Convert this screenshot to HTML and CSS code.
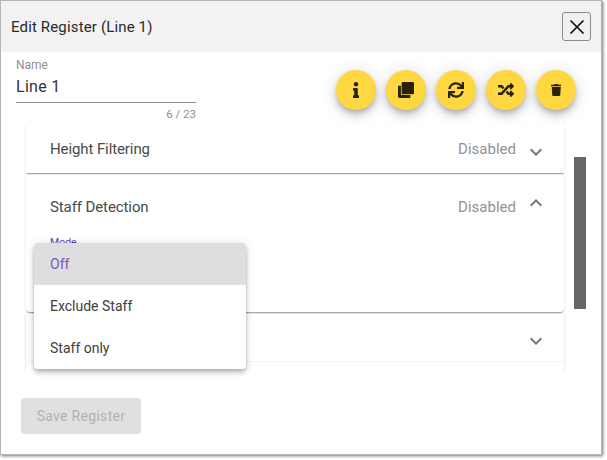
FILE: index.html
```html
<!DOCTYPE html>
<html lang="en">
<head>
<meta charset="utf-8">
<title>Edit Register</title>
<link rel="stylesheet" href="styles.css">
</head>
<body>
<div class="window">
  <header class="head">
    <h1 class="head-title">Edit Register (Line 1)</h1>
    <button class="close" type="button" aria-label="Close">
      <svg viewBox="0 0 16 16" width="16" height="16"><path d="M1.5 1.5l13 13M14.5 1.5l-13 13" fill="none" stroke="#111" stroke-width="1.7"/></svg>
    </button>
  </header>
  <div class="top">
    <div class="field">
      <div class="field-label">Name</div>
      <div class="field-value">Line 1</div>
      <div class="field-count">6 / 23</div>
    </div>
    <div class="actions">
      <button class="fab" type="button" aria-label="Info"><svg class="i-info" viewBox="0 0 192 512"><path d="M20 424.229h20V279.771H20c-11.046 0-20-8.954-20-20V212c0-11.046 8.954-20 20-20h112c11.046 0 20 8.954 20 20v212.229h20c11.046 0 20 8.954 20 20V492c0 11.046-8.954 20-20 20H20c-11.046 0-20-8.954-20-20v-47.771c0-11.046 8.954-20 20-20zM96 0C56.235 0 24 32.235 24 72s32.235 72 72 72 72-32.235 72-72S135.764 0 96 0z"/></svg></button>
      <button class="fab" type="button" aria-label="Copy"><svg class="i-copy" viewBox="1 1 22 22"><path d="M5 6H1v15c0 1.100.9 2 2 2h15v-4H7c-1.100 0-2-.9-2-2V6zM21 1H8c-1.100 0-2 .9-2 2v13c0 1.100.9 2 2 2h13c1.100 0 2-.9 2-2V3c0-1.100-.9-2-2-2z"/></svg></button>
      <button class="fab" type="button" aria-label="Sync"><svg class="i-wide" viewBox="0 0 512 512"><path d="M440.65 12.57l4 82.77A247.16 247.16 0 0 0 255.83 8C134.73 8 33.91 94.92 12.29 209.82A12 12 0 0 0 24.09 224h49.05a12 12 0 0 0 11.67-9.26 175.91 175.91 0 0 1 317-56.94l-101.46-4.86a12 12 0 0 0-12.57 12v47.41a12 12 0 0 0 12 12H500a12 12 0 0 0 12-12V12a12 12 0 0 0-12-12h-47.37a12 12 0 0 0-11.98 12.57zM255.83 432a175.61 175.61 0 0 1-146-77.8l101.8 4.87a12 12 0 0 0 12.57-12v-47.4a12 12 0 0 0-12-12H12a12 12 0 0 0-12 12V500a12 12 0 0 0 12 12h47.35a12 12 0 0 0 12-12.6l-4.15-82.57A247.17 247.17 0 0 0 255.83 504c121.11 0 221.93-86.92 243.55-201.82a12 12 0 0 0-11.8-14.18h-49.05a12 12 0 0 0-11.67 9.26A175.86 175.86 0 0 1 255.83 432z"/></svg></button>
      <button class="fab" type="button" aria-label="Shuffle"><svg class="i-wide" viewBox="0 0 512 512"><path d="M504.971 359.029c9.373 9.373 9.373 24.569 0 33.941l-80 79.984c-15.01 15.01-40.971 4.49-40.971-16.971V416h-58.785a12.004 12.004 0 0 1-8.773-3.812l-70.556-75.596 53.333-57.143L352 336h32v-39.981c0-21.438 25.943-31.998 40.971-16.971l80 79.981zM12 176h84l52.781 56.551 53.333-57.143-70.556-75.596A11.999 11.999 0 0 0 122.785 96H12c-6.627 0-12 5.373-12 12v56c0 6.627 5.373 12 12 12zm372 0v39.984c0 21.46 25.961 31.98 40.971 16.971l80-79.984c9.373-9.373 9.373-24.569 0-33.941l-80-79.981C409.943 24.021 384 34.582 384 56.019V96h-58.785a12.004 12.004 0 0 0-8.773 3.812L96 336H12c-6.627 0-12 5.373-12 12v56c0 6.627 5.373 12 12 12h110.785c3.326 0 6.503-1.381 8.773-3.812L352 176h32z"/></svg></button>
      <button class="fab" type="button" aria-label="Delete"><svg class="i-trash" viewBox="0 0 448 512"><path d="M432 32H312l-9.400-18.700A24 24 0 0 0 281.100 0H166.800a23.720 23.720 0 0 0-21.400 13.300L136 32H16A16 16 0 0 0 0 48v32a16 16 0 0 0 16 16h416a16 16 0 0 0 16-16V48a16 16 0 0 0-16-16zM53.200 467a48 48 0 0 0 47.900 45h245.800a48 48 0 0 0 47.900-45L416 128H32z"/></svg></button>
    </div>
  </div>
  <div class="middle">
    <div class="scroll">
      <section class="panel panel-first">
        <div class="summary">
          <span class="summary-title">Height Filtering</span>
          <span class="summary-state">Disabled</span>
          <svg class="chev" viewBox="0 0 24 24"><path d="M16.59 8.59L12 13.170 7.410 8.590 6 10l6 6 6-6z"/></svg>
        </div>
      </section>
      <section class="panel panel-open">
        <div class="summary">
          <span class="summary-title">Staff Detection</span>
          <span class="summary-state">Disabled</span>
          <svg class="chev chev-up" viewBox="0 0 24 24"><path d="M16.59 8.59L12 13.170 7.410 8.590 6 10l6 6 6-6z"/></svg>
        </div>
        <div class="panel-body"><span class="mode-label">Mode</span></div>
      </section>
      <section class="panel panel-last">
        <div class="summary">
          <span class="summary-title"></span>
          <svg class="chev" viewBox="0 0 24 24"><path d="M16.59 8.59L12 13.170 7.410 8.590 6 10l6 6 6-6z"/></svg>
        </div>
      </section>
    </div>
    <div class="scrollbar"></div>
  </div>
  <div class="foot">
    <button class="save" type="button" disabled>Save Register</button>
  </div>
  <ul class="menu">
    <li class="menu-item menu-item-active">Off</li>
    <li class="menu-item">Exclude Staff</li>
    <li class="menu-item">Staff only</li>
  </ul>
</div>
</body>
</html>
```
FILE: styles.css
```css
* { box-sizing: border-box; }
html, body { margin: 0; padding: 0; background: #fff; }
body { font-family: Roboto, "Liberation Sans", sans-serif; width: 607px; height: 460px; overflow: hidden; }

.window {
  position: relative;
  width: 602px;
  height: 455px;
  background: #fff;
  border: 1px solid #b4b4b4;
  box-shadow: 1px 1px 3px rgba(0, 0, 0, .55);
  display: flex;
  flex-direction: column;
}

.head {
  height: 51px;
  flex: none;
  background: #f2f2f2;
  display: flex;
  align-items: center;
  justify-content: space-between;
  padding: 0 10px 0 10px;
}
.head-title { margin: 0; font-size: 15px; font-weight: 400; color: #2a2a2a; letter-spacing: .15px; }
.close {
  width: 29px;
  height: 29px;
  padding: 0;
  background: #f0f0f0;
  border: 1px solid #8a8a8a;
  border-radius: 3px;
  display: flex;
  align-items: center;
  justify-content: center;
}

.top {
  height: 71px;
  flex: none;
  display: flex;
  justify-content: space-between;
  padding: 0 25px 0 15px;
}
.field { width: 180px; padding-top: 6px; }
.field-label { font-size: 12px; line-height: 14px; color: #8f8f8f; }
.field-value {
  font-size: 16px;
  line-height: 24px;
  height: 31px;
  padding-top: 3px;
  color: #333;
  letter-spacing: .3px;
  border-bottom: 1px solid #8c8c8c;
}
.field-count { font-size: 11.5px; line-height: 14px; margin-top: 4px; color: #8f8f8f; text-align: right; }

.actions { display: flex; gap: 10px; padding-top: 18px; }
.fab {
  width: 40px;
  height: 40px;
  padding: 0;
  border: 0;
  border-radius: 50%;
  background: #ffd740;
  box-shadow: 0 3px 5px -1px rgba(0,0,0,.2), 0 6px 10px 0 rgba(0,0,0,.14), 0 1px 18px 0 rgba(0,0,0,.12);
  display: flex;
  align-items: center;
  justify-content: center;
}
.fab svg { display: block; fill: #2a2208; }
.i-info { width: 6px; height: 16px; }
.i-copy { width: 16px; height: 16px; }
.i-wide { width: 16px; height: 16px; }
.i-trash { width: 10.5px; height: 12px; }

.middle { height: 248px; flex: none; display: flex; }
.scroll {
  margin-left: 21px;
  width: 546px;
  height: 248px;
  padding: 1px 4px 0 4px;
  overflow: hidden;
}
.panel {
  background: #fff;
  box-shadow: 0 2px 1px -1px rgba(0,0,0,.2), 0 1px 1px 0 rgba(0,0,0,.14), 0 1px 3px 0 rgba(0,0,0,.12);
}
.panel-first { height: 49px; border-radius: 4px 4px 0 0; }
.panel-open { height: 137px; margin-top: 2px; border-radius: 4px; }
.panel-last { height: 90px; margin-top: 2px; }
.summary {
  height: 48px;
  display: flex;
  align-items: center;
  padding: 0 16px 0 24px;
}
.panel-first .summary { height: 49px; }
.panel-open .summary { height: 64px; }
.summary-title { flex: 1; font-size: 15px; color: #4a4a4a; letter-spacing: -.1px; }
.summary-state { font-size: 15px; color: #929292; }
.chev { width: 24px; height: 24px; margin-left: 8px; margin-top: 6px; fill: #757575; flex: none; }
.chev-up { transform: rotate(180deg); margin-top: -9px; }
.panel-last .summary { border-bottom: 1px solid #f3f3f3; }
.panel-body { margin-top: -2px; padding: 0 24px; }
.mode-label { display: block; font-size: 10.5px; line-height: 12px; color: #673ab7; }

.scrollbar {
  width: 12px;
  height: 152px;
  margin: 34px 0 0 6px;
  background: #666;
}

.foot { padding: 27px 0 0 20px; }
.save {
  width: 120px;
  height: 36px;
  border: 0;
  border-radius: 4px;
  background: #e0e0e0;
  color: #b2b2b2;
  font: 400 14px Roboto, "Liberation Sans", sans-serif;
  letter-spacing: .3px;
  padding: 0;
}

.menu {
  position: absolute;
  left: 33px;
  top: 242px;
  width: 212px;
  margin: 0;
  padding: 0;
  list-style: none;
  background: #fff;
  border-radius: 4px;
  overflow: hidden;
  box-shadow: 0 2px 4px -1px rgba(0,0,0,.2), 0 4px 5px 0 rgba(0,0,0,.14), 0 1px 10px 0 rgba(0,0,0,.12);
}
.menu-item {
  height: 42px;
  line-height: 42px;
  padding-left: 16px;
  font-size: 14px;
  color: #3e3e3e;
}
.menu-item-active { background: #dedede; color: #7a52c4; }
```
